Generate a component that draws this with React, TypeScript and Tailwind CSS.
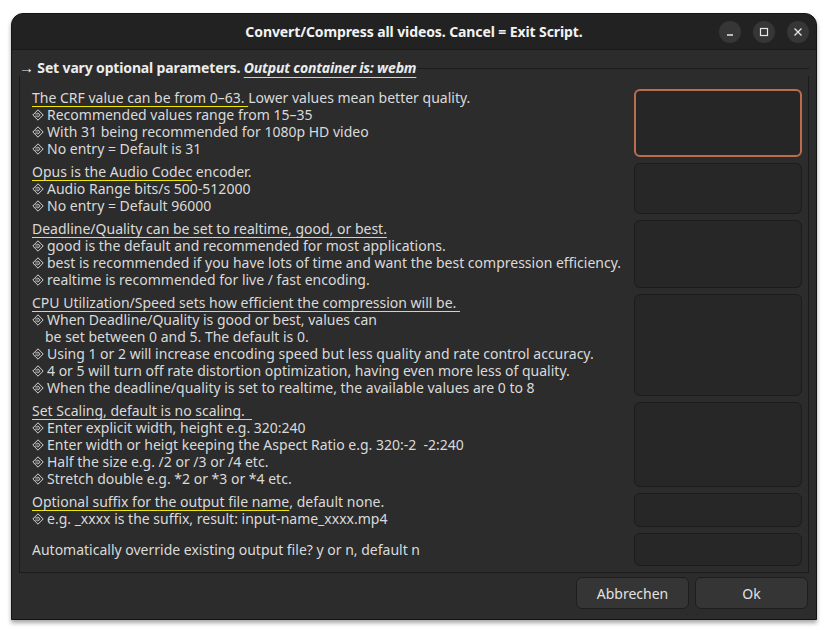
import React from 'react';

const Bullet: React.FC = () => (
  <svg width="12" height="12" viewBox="0 0 12 12" className="inline-block mr-[3px] -mt-[2px] align-middle">
    <path d="M6 0.8 L11.2 6 L6 11.2 L0.8 6 Z" fill="none" stroke="#d6d6d6" strokeWidth="1" />
    <path d="M3.2 4.9 H6.6 M3.2 7.1 H6.6 M5.8 3.6 L8.2 6 L5.8 8.4" fill="none" stroke="#d6d6d6" strokeWidth="0.9" />
  </svg>
);

const U: React.FC<{ children: React.ReactNode }> = ({ children }) => (
  <span className="underline decoration-[#f0e800] underline-offset-[3px] whitespace-pre">{children}</span>
);

const Line: React.FC<{ children: React.ReactNode; bullet?: boolean }> = ({ children, bullet }) => (
  <div className="whitespace-pre h-[17px]">
    {bullet && <Bullet />}
    {children}
  </div>
);

const Field: React.FC<{ focused?: boolean }> = ({ focused }) => (
  <div
    className={
      focused
        ? 'rounded-[6px] border-2 border-[#bd6c4e] bg-[#262626]'
        : 'rounded-[6px] border border-[#1c1c1c] bg-[#272727]'
    }
  />
);

export default function App() {
  const rows: { label: React.ReactNode; focused?: boolean; center?: boolean }[] = [
    {
      focused: true,
      label: (
        <>
          <Line><U>The CRF value can be from 0–63. </U>Lower values mean better quality.</Line>
          <Line bullet>Recommended values range from 15–35</Line>
          <Line bullet>With 31 being recommended for 1080p HD video</Line>
          <Line bullet>No entry = Default is 31</Line>
        </>
      ),
    },
    {
      label: (
        <>
          <Line><U>Opus is the Audio Codec</U> encoder.</Line>
          <Line bullet>Audio Range bits/s 500-512000</Line>
          <Line bullet>No entry = Default 96000</Line>
        </>
      ),
    },
    {
      label: (
        <>
          <Line><U>Deadline/Quality can be set</U><U> to realtime, good, or best.</U></Line>
          <Line bullet>good is the default and recommended for most applications.</Line>
          <Line bullet>best is recommended if you have lots of time and want the best compression efficiency.</Line>
          <Line bullet>realtime is recommended for live / fast encoding.</Line>
        </>
      ),
    },
    {
      label: (
        <>
          <Line><U>CPU Utilization/Speed sets how efficient the compression will be. </U></Line>
          <Line bullet>When Deadline/Quality is good or best, values can</Line>
          <Line><span className="pl-[13px]">be set between 0 and 5. The default is 0.</span></Line>
          <Line bullet>Using 1 or 2 will increase encoding speed but less quality and rate control accuracy.</Line>
          <Line bullet>4 or 5 will turn off rate distortion optimization, having even more less of quality.</Line>
          <Line bullet>When the deadline/quality is set to realtime, the available values are 0 to 8</Line>
        </>
      ),
    },
    {
      label: (
        <>
          <Line><U>Set Scaling, default is no scaling.  </U></Line>
          <Line bullet>Enter explicit width, height e.g. 320:240</Line>
          <Line bullet>Enter width or heigt keeping the Aspect Ratio e.g. 320:-2  -2:240</Line>
          <Line bullet>Half the size e.g. /2 or /3 or /4 etc.</Line>
          <Line bullet>Stretch double e.g. *2 or *3 or *4 etc.</Line>
        </>
      ),
    },
    {
      label: (
        <>
          <Line><U>Optional suffix for t</U><U>he output file name</U>, default none.</Line>
          <Line bullet>e.g. _xxxx is the suffix, result: input-name_xxxx.mp4</Line>
        </>
      ),
    },
    {
      center: true,
      label: <Line>Automatically override existing output file? y or n, default n</Line>,
    },
  ];

  return (
    <div className="min-h-screen bg-white pl-[11px] pt-[13px]" style={{ fontFamily: '"Noto Sans", "Open Sans", sans-serif' }}>
      <div className="w-[806px] flex flex-col rounded-t-[12px] bg-[#2c2c2c] border border-[#141414] shadow-[0_3px_4px_rgba(0,0,0,0.35)] overflow-hidden">
        {/* title bar */}
        <div className="h-[36px] grid grid-cols-[1fr_auto_1fr] items-center bg-[#222222] border-b border-[#1a1a1a]">
          <div />
          <div className="text-[14px] font-bold text-[#f2f2f2] tracking-[-0.1px]">
            Convert/Compress all videos. Cancel = Exit Script.
          </div>
          <div className="flex justify-end gap-[12px] pr-[7px]">
            <div className="w-[22px] h-[22px] rounded-full bg-[#363636] flex items-center justify-center">
              <svg width="10" height="10" viewBox="0 0 10 10"><path d="M2 8 H8" stroke="#e6e6e6" strokeWidth="1.4" /></svg>
            </div>
            <div className="w-[22px] h-[22px] rounded-full bg-[#363636] flex items-center justify-center">
              <svg width="10" height="10" viewBox="0 0 10 10"><rect x="1.5" y="1.5" width="7" height="7" fill="none" stroke="#e6e6e6" strokeWidth="1.2" /></svg>
            </div>
            <div className="w-[22px] h-[22px] rounded-full bg-[#363636] flex items-center justify-center">
              <svg width="10" height="10" viewBox="0 0 10 10"><path d="M1.5 1.5 L8.5 8.5 M8.5 1.5 L1.5 8.5" stroke="#e6e6e6" strokeWidth="1.3" /></svg>
            </div>
          </div>
        </div>

        {/* content */}
        <div className="pt-[9px] px-[7px] text-[14px] leading-[17px] text-[#dadada]">
          <div className="flex items-center">
            <div className="font-bold text-[#ececec] whitespace-pre tracking-[-0.15px]">
              <span className="text-[15px]">→</span> Set vary optional parameters.{' '}
              <span className="italic underline decoration-[#f0e800] underline-offset-[4px]">Output container is: webm</span>
            </div>
            <div className="flex-1 h-px bg-[#1b1b1b] mt-[1px]" />
          </div>
          <div className="border border-t-0 border-[#1b1b1b] pt-[13px] pb-[6px] pl-[12px] pr-[6px]">
            <div className="grid grid-cols-[1fr_168px] gap-y-[6px]">
              {rows.map((r, i) => (
                <React.Fragment key={i}>
                  <div className={r.center ? 'flex flex-col justify-center h-[33px]' : ''}>{r.label}</div>
                  <Field focused={r.focused} />
                </React.Fragment>
              ))}
            </div>
          </div>
        </div>

        {/* buttons */}
        <div className="flex justify-end gap-[6px] pt-[4px] pb-[10px] pr-[8px]">
          <button className="w-[113px] h-[32px] rounded-[6px] bg-[#353535] border border-[#1e1e1e] text-[14px] text-[#e2e2e2]">
            Abbrechen
          </button>
          <button className="w-[113px] h-[32px] rounded-[6px] bg-[#353535] border border-[#1e1e1e] text-[14px] text-[#e2e2e2]">
            Ok
          </button>
        </div>
      </div>
    </div>
  );
}
